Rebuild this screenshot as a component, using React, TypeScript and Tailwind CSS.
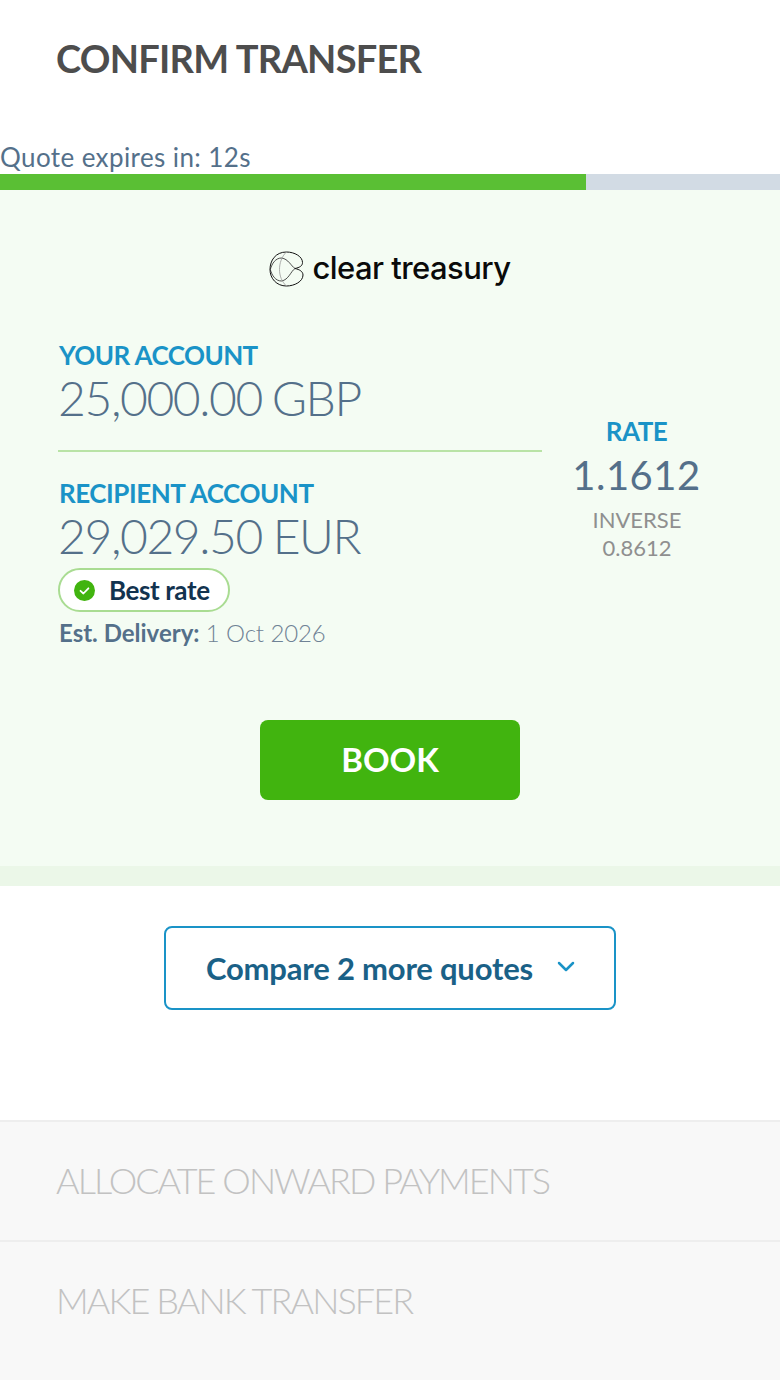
import React from "react";

function Logo() {
  return (
    <div className="flex items-center justify-center h-[38px]">
      <svg width="35" height="37" viewBox="7.500 6.500 35 37" fill="none" className="mr-[8px] mt-px shrink-0">
        <path d="M25 7.500C14 7.500 8.500 16 8.500 25C8.500 34 15 41.500 25 41.500C33 41.500 41.500 37 41.500 30.500C41.500 27 38 25 33.500 24C38 23 41 21.500 41 18C41 12 33 7.500 25 7.500Z" stroke="#111" strokeWidth="1" />
        <path d="M33.500 24C29.500 21.500 27 14.500 20 13.500C14 13.500 10.500 19 8.800 25C10.500 31 14 36.500 20 36.500C27 35.500 29.500 26.500 33.500 24" stroke="#222" strokeWidth="0.8" />
        <path d="M25 7.500C20 12 18 19 18 25C18 31 20 37 25 41.500" stroke="#999" strokeWidth="0.8" />
      </svg>
      <span className="font-['Inter',sans-serif] text-[31px] font-medium text-[#0a0a0a] tracking-[-0.55px] leading-none mb-[3px]">clear treasury</span>
    </div>
  );
}

export default function App() {
  return (
    <div className="w-[780px] h-[1380px] bg-white font-['Lato',sans-serif] overflow-hidden">
      <div className="h-[143px] pl-14 pt-[35px]">
        <h1 className="text-[38px] leading-[46px] font-bold text-[#4d4d4d] tracking-[-0.75px]">CONFIRM TRANSFER</h1>
      </div>
      <div className="text-[26px] leading-[29px] text-[#54708a] h-[31px] tracking-[0.4px]">Quote expires in: 12s</div>
      <div className="h-4 bg-[#d2dbe4]">
        <div className="h-4 w-[586px] bg-[#5abf34]"></div>
      </div>
      <div className="bg-[#f4fcf3] h-[676px] pt-[60px]">
        <Logo />
        <div className="flex mt-[53px] pl-[58px]">
          <div className="w-[484px]">
            <div className="pl-px text-[26px] leading-[34px] font-bold text-[#1a93c7] tracking-[-0.55px] mt-[-3px]">YOUR ACCOUNT</div>
            <div className="text-[48px] leading-[58px] font-light text-[#54708a] tracking-[-1.4px] [word-spacing:-2px] mt-[-3px]">25,000.00 GBP</div>
            <div className="h-[2px] bg-[#b9e3a6] mt-[23px]"></div>
            <div className="pl-px text-[26px] leading-[34px] font-bold text-[#1a93c7] tracking-[-0.45px] mt-6">RECIPIENT ACCOUNT</div>
            <div className="text-[48px] leading-[58px] font-light text-[#54708a] tracking-[-1.4px] [word-spacing:-1px] mt-[-3px]">29,029.50 EUR</div>
            <div className="flex items-center h-11 w-[172px] bg-white border-2 border-[#a9dc92] rounded-full pl-[14px] mt-[3px]">
              <svg width="21" height="21" viewBox="0 0 21 21" className="shrink-0">
                <circle cx="10.500" cy="10.500" r="10.500" fill="#41b40f" />
                <path d="M6.500 10.800l2.900 2.700 5-5.200" fill="none" stroke="#fff" strokeWidth="1.800" strokeLinecap="round" strokeLinejoin="round" />
              </svg>
              <span className="ml-[14px] text-[26px] font-bold text-[#12334f] leading-none tracking-[-0.4px]">Best rate</span>
            </div>
            <div className="pl-px text-[24px] leading-[28px] text-[#54708a] mt-[7px]">
              <span className="font-bold">Est. Delivery:</span> <span className="font-light text-[#6f8295] tracking-[-0.1px]">1 Oct 2026</span>
            </div>
          </div>
          <div className="w-[190px] flex flex-col items-center pt-[75px]">
            <div className="text-[26px] leading-[30px] font-bold text-[#1a93c7] tracking-[-0.45px] mr-px">RATE</div>
            <div className="text-[40px] leading-[48px] text-[#54708a] mt-[5px] tracking-[0.5px] mr-px">1.1612</div>
            <div className="text-[22px] leading-[28px] text-[#8f8f8f] mt-[7px]">INVERSE</div>
            <div className="text-[22px] leading-[28px] text-[#8f8f8f]">0.8612</div>
          </div>
        </div>
        <div className="flex justify-center mt-[73px]">
          <button className="w-[260px] h-20 rounded-lg bg-[#41b40f] text-white text-[33px] font-bold">BOOK</button>
        </div>
      </div>
      <div className="h-5 bg-[#ebf7e8]"></div>
      <div className="flex justify-center pt-10 h-[234px]">
        <button className="w-[452px] h-[84px] border-2 border-[#1a93c7] rounded-lg flex items-center pl-10 bg-white">
          <span className="text-[31px] font-bold text-[#1a6187] tracking-[-0.2px]">Compare 2 more quotes</span>
          <svg width="18" height="11" viewBox="0 0 18 11" fill="none" stroke="#1a93c7" strokeWidth="2.500" className="ml-[24px] mb-[3px]" strokeLinecap="round" strokeLinejoin="round"><path d="M2 2l7 7 7-7" /></svg>
        </button>
      </div>
      <div className="h-[120px] bg-[#f8f8f8] border-t-2 border-[#eeeeee] pl-14 pb-[2px] flex items-center">
        <span className="text-[36px] font-light text-[#c2c2c2] tracking-[-1.95px]">ALLOCATE ONWARD PAYMENTS</span>
      </div>
      <div className="h-[140px] bg-[#f8f8f8] border-t-2 border-[#eeeeee] pl-14 pt-[36px]">
        <span className="text-[36px] leading-[44px] block font-light text-[#c2c2c2] tracking-[-1.9px]">MAKE BANK TRANSFER</span>
      </div>
    </div>
  );
}
